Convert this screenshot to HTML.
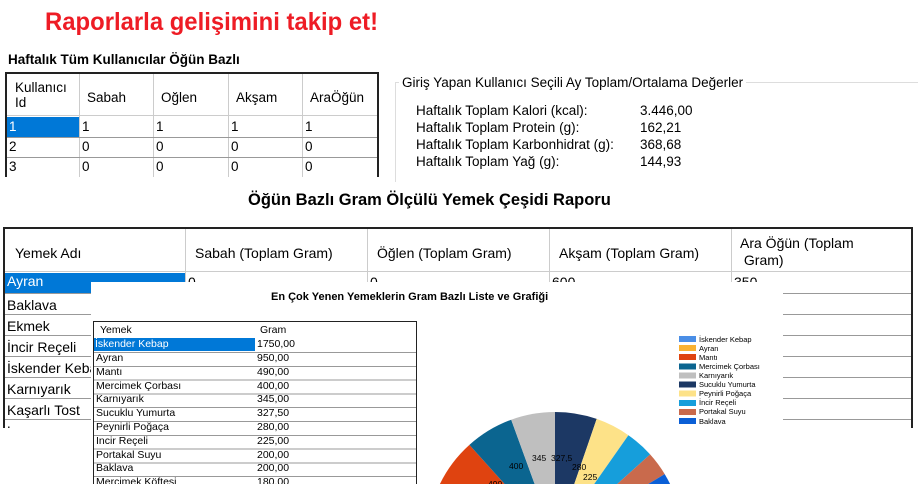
<!DOCTYPE html>
<html><head><meta charset="utf-8"><style>
*{margin:0;padding:0;box-sizing:border-box}
html,body{width:918px;height:484px;overflow:hidden;background:#fff;font-family:"Liberation Sans",sans-serif;color:#000}
.a{position:absolute}
.t{white-space:nowrap}
</style></head><body>
<div class="a t" style="left:45px;top:8px;font-size:25px;font-weight:bold;color:#ee1c25;transform:scaleX(0.955);transform-origin:left top">Raporlarla gelişimini takip et!</div>
<div class="a t" style="left:8px;top:52px;font-size:13.5px;font-weight:bold">Haftalık Tüm Kullanıcılar Öğün Bazlı</div>

<div class="a" style="left:5px;top:72px;width:374px;height:105px;border:2px solid #222;border-bottom:none;overflow:hidden;font-size:13.5px">
 <div class="a" style="left:0;top:0;width:372px;height:42px;border-bottom:1px solid #ccc"></div>
 <div class="a" style="left:8px;top:6px;line-height:15px">Kullanıcı<br>Id</div>
 <div class="a" style="left:80px;top:16px">Sabah</div>
 <div class="a" style="left:154px;top:16px">Oğlen</div>
 <div class="a" style="left:229px;top:16px">Akşam</div>
 <div class="a" style="left:303px;top:16px">AraÖğün</div>
 <div class="a" style="left:72px;top:0;width:1px;height:120px;background:#ccc"></div>
 <div class="a" style="left:146px;top:0;width:1px;height:120px;background:#ccc"></div>
 <div class="a" style="left:221px;top:0;width:1px;height:120px;background:#ccc"></div>
 <div class="a" style="left:295px;top:0;width:1px;height:120px;background:#ccc"></div>
 <div class="a" style="left:0;top:43px;width:72px;height:20px;background:#0078d7;color:#fff;padding-left:2px;padding-top:2px">1</div>
 <div class="a" style="left:75px;top:45px">1</div><div class="a" style="left:149px;top:45px">1</div><div class="a" style="left:224px;top:45px">1</div><div class="a" style="left:298px;top:45px">1</div>
 <div class="a" style="left:0;top:63px;width:372px;height:1px;background:#999"></div>
 <div class="a" style="left:2px;top:65px">2</div><div class="a" style="left:75px;top:65px">0</div><div class="a" style="left:149px;top:65px">0</div><div class="a" style="left:224px;top:65px">0</div><div class="a" style="left:298px;top:65px">0</div>
 <div class="a" style="left:0;top:83px;width:372px;height:1px;background:#999"></div>
 <div class="a" style="left:2px;top:85px">3</div><div class="a" style="left:75px;top:85px">0</div><div class="a" style="left:149px;top:85px">0</div><div class="a" style="left:224px;top:85px">0</div><div class="a" style="left:298px;top:85px">0</div>
</div>

<div class="a" style="left:395px;top:82px;width:523px;height:100px;border:1px solid #ddd;border-right:none;border-bottom:none"></div>
<div class="a t" style="left:399px;top:75px;background:#fff;padding:0 3px;font-size:13.5px">Giriş Yapan Kullanıcı Seçili Ay Toplam/Ortalama Değerler</div>
<div class="a" style="left:416px;top:102px;font-size:13.5px;line-height:17px">Haftalık Toplam Kalori (kcal):<br>Haftalık Toplam Protein (g):<br>Haftalık Toplam Karbonhidrat (g):<br>Haftalık Toplam Yağ (g):</div>
<div class="a" style="left:640px;top:102px;font-size:13.5px;line-height:17px">3.446,00<br>162,21<br>368,68<br>144,93</div>

<div class="a t" style="left:248px;top:191px;font-size:16.5px;font-weight:bold">Öğün Bazlı Gram Ölçülü Yemek Çeşidi Raporu</div>

<div class="a" style="left:3px;top:227px;width:910px;height:201px;border:2px solid #222;border-bottom:none;overflow:hidden;font-size:14px">
 <div class="a" style="left:0;top:0;width:908px;height:43px;border-bottom:1px solid #ccc"></div>
 <div class="a" style="left:180px;top:0;width:1px;height:60px;background:#ccc"></div>
 <div class="a" style="left:362px;top:0;width:1px;height:60px;background:#ccc"></div>
 <div class="a" style="left:544px;top:0;width:1px;height:60px;background:#ccc"></div>
 <div class="a" style="left:726px;top:0;width:1px;height:60px;background:#ccc"></div>
 <div class="a t" style="left:10px;top:16px">Yemek Adı</div>
 <div class="a t" style="left:190px;top:16px">Sabah (Toplam Gram)</div>
 <div class="a t" style="left:372px;top:16px">Öğlen (Toplam Gram)</div>
 <div class="a t" style="left:554px;top:16px">Akşam (Toplam Gram)</div>
 <div class="a" style="left:735px;top:6px;line-height:17px">Ara Öğün (Toplam<br>&nbsp;Gram)</div>
 <div class="a" style="left:0;top:44px;width:180px;height:20px;background:#0078d7;color:#fff;padding-left:2px">Ayran</div>
 <div class="a" style="left:183px;top:45px">0</div><div class="a" style="left:365px;top:45px">0</div><div class="a" style="left:547px;top:45px">600</div><div class="a" style="left:729px;top:45px">350</div>
 <div class="a" style="left:2px;top:66px;line-height:21px">Baklava<br>Ekmek<br>İncir Reçeli<br>İskender Kebap<br>Karnıyarık<br>Kaşarlı Tost<br>Lazanya</div>
 <div class="a" style="left:0;top:64px;width:908px;height:1px;background:#999"></div>
 <div class="a" style="left:0;top:85px;width:908px;height:1px;background:#999"></div>
 <div class="a" style="left:0;top:106px;width:908px;height:1px;background:#999"></div>
 <div class="a" style="left:0;top:127px;width:908px;height:1px;background:#999"></div>
 <div class="a" style="left:0;top:148px;width:908px;height:1px;background:#999"></div>
 <div class="a" style="left:0;top:169px;width:908px;height:1px;background:#999"></div>
 <div class="a" style="left:0;top:190px;width:908px;height:1px;background:#999"></div>
</div>

<div class="a" style="left:91px;top:282px;width:692px;height:202px;background:#fff"></div>
<div class="a t" style="left:271px;top:291px;font-size:11px;font-weight:bold">En Çok Yenen Yemeklerin Gram Bazlı Liste ve Grafiği</div>
<div class="a" style="left:93px;top:321px;width:324px;height:163px;border:1px solid #222;border-bottom:none;font-size:10.5px;overflow:hidden">
 <div class="a" style="left:6px;top:2px">Yemek</div><div class="a" style="left:166px;top:2px">Gram</div>
 <div class="a" style="left:0;top:16px;width:161px;height:13px;background:#0078d7;color:#fff;padding-left:1px;line-height:13px">İskender Kebap</div>
 <div class="a" style="left:163px;top:16px;line-height:13px">1750,00</div>
 <div class="a" style="left:2px;top:30px;line-height:13.8px">Ayran<br>Mantı<br>Mercimek Çorbası<br>Karnıyarık<br>Sucuklu Yumurta<br>Peynirli Poğaça<br>İncir Reçeli<br>Portakal Suyu<br>Baklava<br>Mercimek Köftesi</div>
 <div class="a" style="left:163px;top:30px;line-height:13.8px">950,00<br>490,00<br>400,00<br>345,00<br>327,50<br>280,00<br>225,00<br>200,00<br>200,00<br>180,00</div>
 <div class="a" style="left:0;top:30px;width:322px;height:133px;background:repeating-linear-gradient(to bottom,#999 0,#999 1px,transparent 1px,transparent 13.8px)"></div>
</div>

<svg class="a" style="left:0;top:0" width="918" height="484">
 <path d="M555 540 L555 412 A128 128 0 0 1 596.7 418.9Z" fill="#1c3864"/>
 <path d="M555 540 L596.7 418.9 A128 128 0 0 1 628.4 435.2Z" fill="#fde288"/>
 <path d="M555 540 L628.4 435.2 A128 128 0 0 1 650.1 454.4Z" fill="#169edb"/>
 <path d="M555 540 L650.1 454.4 A128 128 0 0 1 664.7 474.1Z" fill="#c96a4c"/>
 <path d="M555 540 L664.7 474.1 A128 128 0 0 1 675.3 496.2Z" fill="#0a5fd6"/>
 <path d="M555 540 L675.3 496.2 A128 128 0 0 1 445.3 605.9Z" fill="#4a8ee6"/>
 <path d="M555 540 L445.3 605.9 A128 128 0 0 1 435.5 494.2Z" fill="#f9b233"/>
 <path d="M555 540 L435.5 494.2 A128 128 0 0 1 469.4 444.9Z" fill="#df4310"/>
 <path d="M555 540 L469.4 444.9 A128 128 0 0 1 511.2 419.7Z" fill="#0b6590"/>
 <path d="M555 540 L511.2 419.7 A128 128 0 0 1 555 412Z" fill="#bfbfbf"/>
 <g font-size="8.5" font-family="Liberation Sans">
 <text x="509" y="469">400</text><text x="532" y="461">345</text><text x="551" y="461">327,5</text><text x="572" y="470">280</text><text x="583" y="480">225</text><text x="488" y="487">490</text>
 </g>
 <g font-size="7.5" font-family="Liberation Sans">
 <rect x="679" y="336" width="17" height="6" fill="#4a8ee6"/><text x="699" y="342">İskender Kebap</text>
 <rect x="679" y="345" width="17" height="6" fill="#f9b233"/><text x="699" y="351">Ayran</text>
 <rect x="679" y="354" width="17" height="6" fill="#df4310"/><text x="699" y="360">Mantı</text>
 <rect x="679" y="363.5" width="17" height="6" fill="#0b6590"/><text x="699" y="369">Mercimek Çorbası</text>
 <rect x="679" y="372.5" width="17" height="6" fill="#bfbfbf"/><text x="699" y="378">Karnıyarık</text>
 <rect x="679" y="381.5" width="17" height="6" fill="#1c3864"/><text x="699" y="387">Sucuklu Yumurta</text>
 <rect x="679" y="390.5" width="17" height="6" fill="#fde288"/><text x="699" y="396">Peynirli Poğaça</text>
 <rect x="679" y="400" width="17" height="6" fill="#169edb"/><text x="699" y="405">İncir Reçeli</text>
 <rect x="679" y="409" width="17" height="6" fill="#c96a4c"/><text x="699" y="414">Portakal Suyu</text>
 <rect x="679" y="418" width="17" height="6" fill="#0a5fd6"/><text x="699" y="424">Baklava</text>
 </g>
</svg>
</body></html>
